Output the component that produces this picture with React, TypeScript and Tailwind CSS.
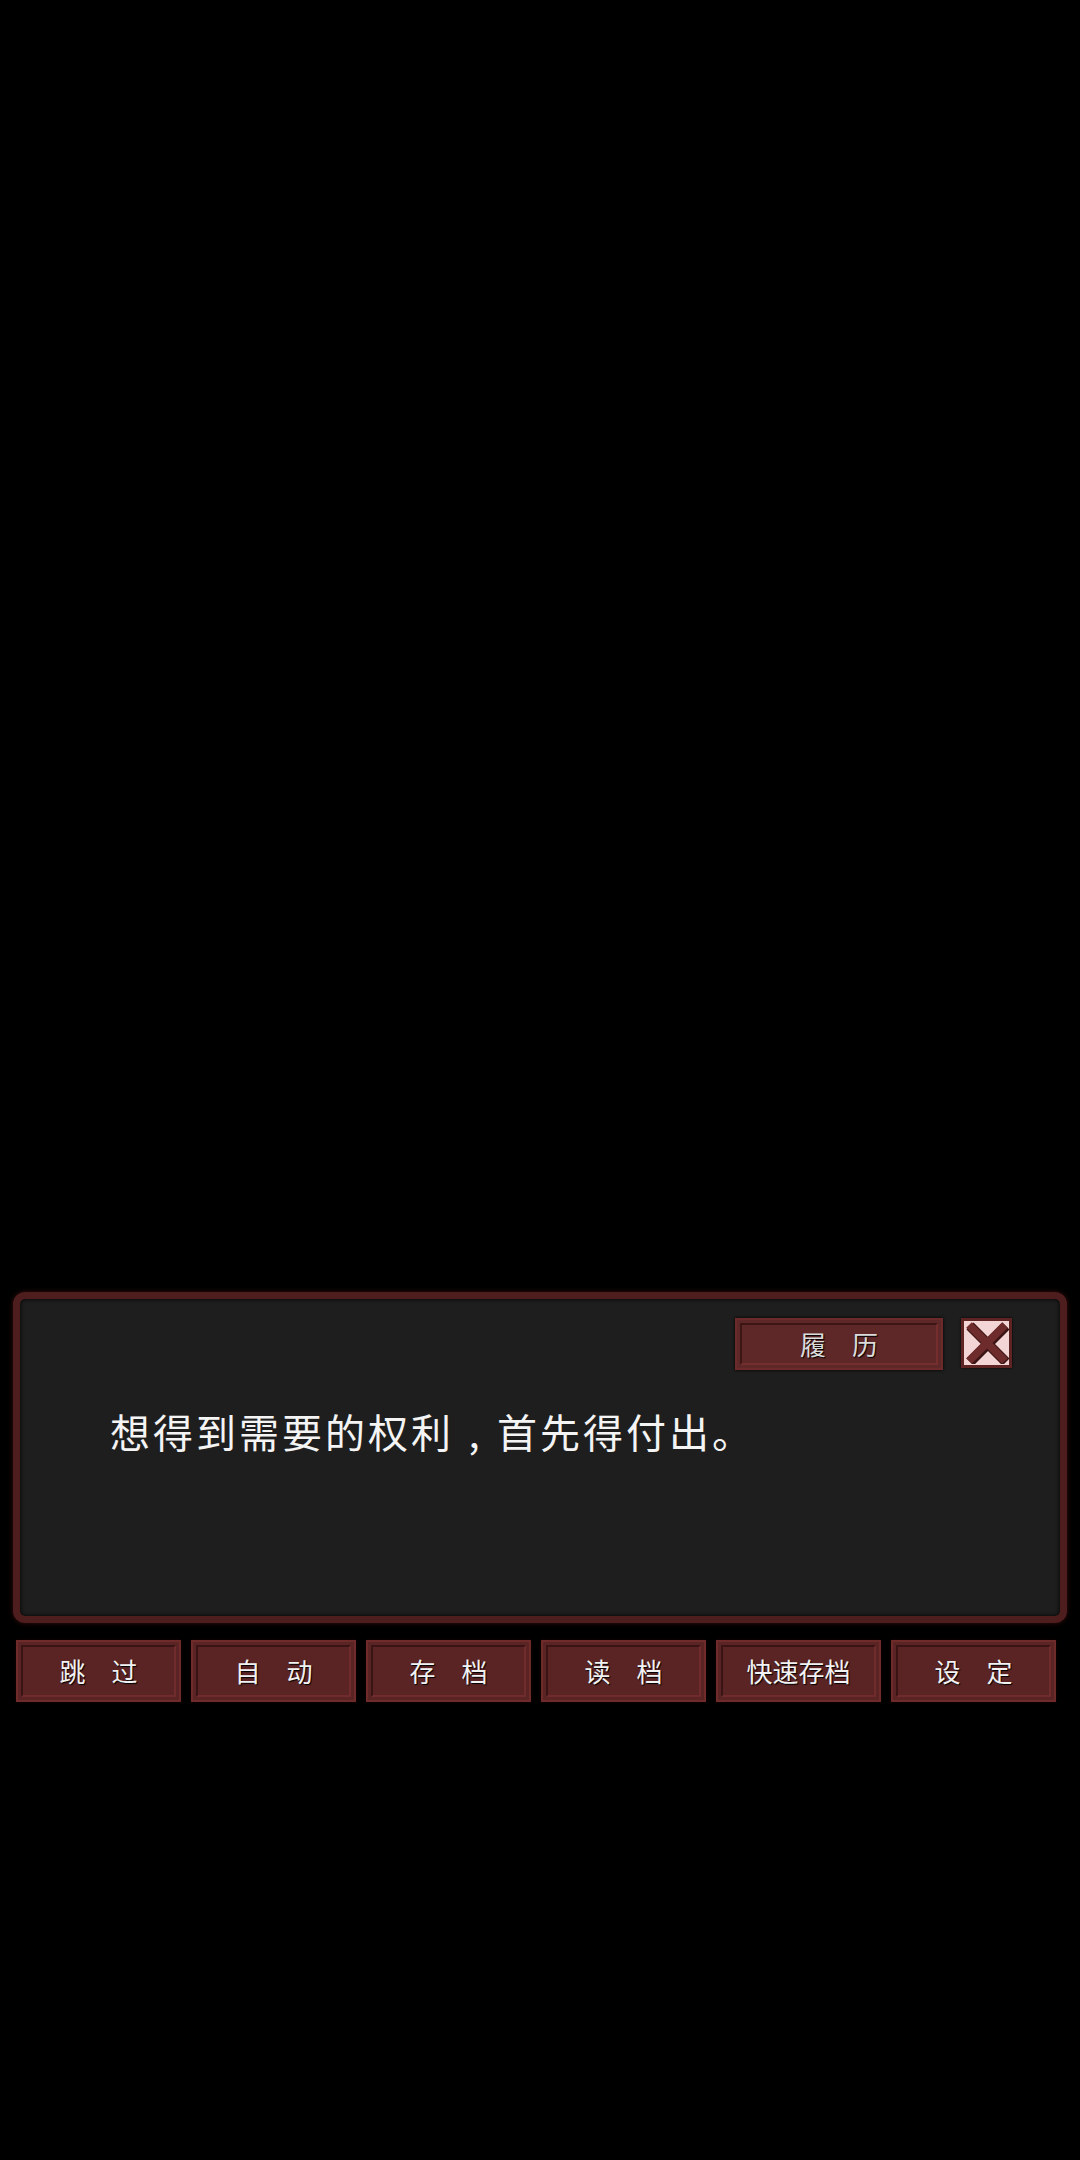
const font = { fontFamily: '"Noto Sans CJK SC", "Noto Sans", sans-serif' };

const menu = ["跳　过", "自　动", "存　档", "读　档", "快速存档", "设　定"];

function MenuButton({ label }: { label: string }) {
  return (
    <button className="w-[165px] h-[62px] border-2 border-[#6f2a2a] bg-[#5a2424] p-[3px] shadow-[0_0_3px_#1a0505]">
      <div className="w-full h-full border-2 border-t-[#3a1414] border-l-[#3a1414] border-b-[#702c2c] border-r-[#702c2c] flex items-center justify-center">
        <span className="text-[26px] leading-none text-[#f2f2f2] [text-shadow:1px_1px_1px_#000]">
          {label}
        </span>
      </div>
    </button>
  );
}

function CloseButton() {
  return (
    <button className="w-[51px] h-[50px] border-[3px] border-[#5e2424] bg-[#f3d5d5] flex items-center justify-center shadow-[0_0_2px_#000]">
      <svg width="44" height="42" viewBox="0 0 44 42">
        <path d="M4 3 L40 39 M40 3 L4 39" stroke="#3a1313" strokeWidth="10" transform="translate(1,1)" />
        <path d="M4 3 L40 39 M40 3 L4 39" stroke="#6e2b2b" strokeWidth="8" />
      </svg>
    </button>
  );
}

export default function App() {
  return (
    <div className="w-[1080px] h-[2160px] bg-black pt-[1292px]" style={font}>
      <div className="mx-[13px] h-[331px] rounded-[12px] border-[7px] border-[#4e1d1d] bg-[#1e1e1e] shadow-[0_0_5px_#3a0e0e,inset_0_0_4px_#000]">
        <div className="flex justify-end items-start gap-[18px] pt-[19px] pr-[48px]">
          <button className="w-[208px] h-[52px] border-2 border-[#6c2a2a] bg-[#5e2828] p-[3px] shadow-[0_0_3px_#000]">
            <div className="w-full h-full border-2 border-t-[#3c1515] border-l-[#3c1515] border-b-[#742e2e] border-r-[#742e2e] flex items-center justify-center">
              <span className="text-[26px] leading-none text-[#dcdcdc] [text-shadow:1px_1px_1px_#000]">
                履　历
              </span>
            </div>
          </button>
          <CloseButton />
        </div>
        <p className="mt-[41px] pl-[90px] text-[40px] leading-[40px] tracking-[3px] text-[#f4f4f4]">
          想得到需要的权利
          <span className="inline-block w-[43px] text-center">,</span>
          首先得付出。
        </p>
      </div>
      <div className="flex gap-[10px] px-[16px] mt-[17px]">
        {menu.map((m) => (
          <MenuButton key={m} label={m} />
        ))}
      </div>
    </div>
  );
}
